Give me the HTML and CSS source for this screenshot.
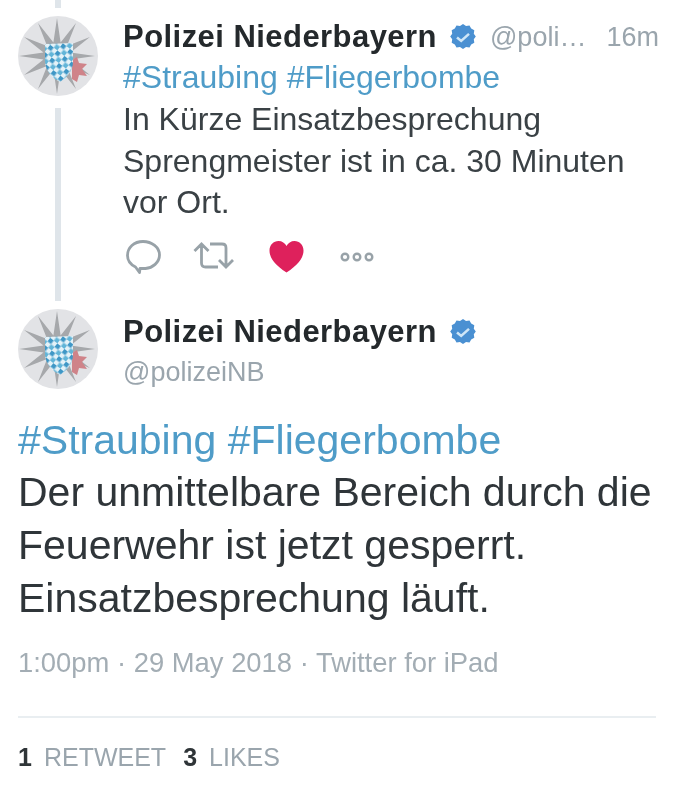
FILE: index.html
```html
<!doctype html>
<html>
	<head>
		<meta charset="utf-8"/>
		<title>Polizei Niederbayern</title>
		<link rel="stylesheet" href="styles.css">
	</head>
	<body>
		<svg class="defs" width="0" height="0">
			<defs>
				<pattern id="lozenge" width="9" height="9" patternUnits="userSpaceOnUse" patternTransform="rotate(38 40 40)">
					<rect width="9" height="9" fill="#e4f2f8"/>
					<rect width="4.500" height="4.500" fill="#3f97c6"/>
					<rect x="4.500" y="4.500" width="4.500" height="4.500" fill="#62b5d8"/>
				</pattern>
				<g id="avatar">
					<circle cx="40" cy="40" r="40" fill="#e2e3e6"/>
					<path d="M39 2L42.600 26.500L58 7.100L48.900 30.100L71.900 21L52.500 36.400L77 40L52.500 43.600L71.900 59L48.900 49.900L58 72.900L42.600 53.500L39 78L35.400 53.500L20 72.900L29.100 49.900L6.100 59L25.500 43.600L1 40L25.500 36.400L6.100 21L29.100 30.100L20 7.100L35.400 26.500Z" fill="#a6a8ab"/>
					<path d="M54 44L59 41L61 47L69 48L64 53L69 60L61 59L59 66L54 63Z" fill="#cf8389"/>
					<path d="M27 28L55 27V46C55 55 48 62 42 66C34 62 27 54 27 45Z" fill="url(#lozenge)"/>
				</g>
				<g id="badge">
					<path d="M14 1l3 2 3.500-.5 1.700 3.100 3.100 1.700-.5 3.500 2 2.700-2 2.700.5 3.500-3.100 1.700-1.700 3.100-3.500-.5-3 2-3-2-3.500.5-1.700-3.100-3.100-1.700.5-3.500-2-2.700 2-2.700-.5-3.500 3.100-1.700 1.700-3.100 3.500.5z" fill="#4a90d2"/>
					<path d="M8 14.500l4.200 3.400 7.800-7" fill="none" stroke="#cfe6f7" stroke-width="2.600"/>
				</g>
			</defs>
		</svg>

		<div class="reply">
			<div class="side">
				<div class="line-top"></div>
				<svg class="avatar" viewBox="0 0 80 80"><use href="#avatar"/></svg>
				<div class="line"></div>
			</div>
			<div class="reply-body">
				<div class="head">
					<span class="name">Polizei Niederbayern</span>
					<svg class="badge" viewBox="0 0 28 28"><use href="#badge"/></svg>
					<span class="handle">@poli…</span>
					<span class="time">16m</span>
				</div>
				<div class="tags">#Straubing #Fliegerbombe</div>
				<p class="text">In Kürze Einsatzbesprechung<br>Sprengmeister ist in ca. 30 Minuten<br>vor Ort.</p>
				<div class="actions">
					<svg class="icon" width="38" height="36" viewBox="0 0 38 36">
						<path d="M15 29.500l-.5 4-4-5.500C5.500 25.500 2.500 21 2.500 16.500 2.500 8.500 9 2.500 18 2.500s16.500 6 16.500 13.500c0 7.500-7 13-14 13.500z" fill="none" stroke="#98a2a8" stroke-width="2.800" stroke-linejoin="round"/>
					</svg>
					<svg class="icon retweet" width="44" height="36" viewBox="0 0 44 36">
						<path d="M1.500 12L8.500 5L15.500 12M8.500 6V24Q8.500 28 12.500 28H25M40 21L33 28L26 21M33 27V9Q33 5 29 5H17" fill="none" stroke="#98a2a8" stroke-width="2.800"/>
					</svg>
					<svg class="icon heart" width="36" height="34" viewBox="0 0 36 34">
						<path d="M17.500 32.500C6 25 .5 18 .5 10.500 .5 5 4.500 1 9.500 1c3.500 0 6.500 2 8 5 1.500-3 4.500-5 8-5 5 0 9 4 9 9.500 0 7.500-5.500 14.500-17 22z" fill="#de215c"/>
					</svg>
					<svg class="icon more" width="36" height="12" viewBox="0 0 36 12">
						<g fill="none" stroke="#98a2a8" stroke-width="2.400">
							<circle cx="6" cy="6" r="3.300"/>
							<circle cx="18" cy="6" r="3.300"/>
							<circle cx="30" cy="6" r="3.300"/>
						</g>
					</svg>
				</div>
			</div>
		</div>

		<div class="tweet">
			<div class="author">
				<svg class="avatar" viewBox="0 0 80 80"><use href="#avatar"/></svg>
				<div class="who">
					<div class="who-name">
						<span class="name">Polizei Niederbayern</span>
						<svg class="badge" viewBox="0 0 28 28"><use href="#badge"/></svg>
					</div>
					<div class="handle">@polizeiNB</div>
				</div>
			</div>
			<div class="big-tags">#Straubing #Fliegerbombe</div>
			<p class="big-text">Der unmittelbare Bereich durch die<br>Feuerwehr ist jetzt gesperrt.<br>Einsatzbesprechung läuft.</p>
			<div class="meta">1:00pm · 29 May 2018 · Twitter for iPad</div>
			<div class="stats">
				<b>1</b><span class="stat-label">RETWEET</span><b>3</b><span class="stat-label">LIKES</span>
			</div>
		</div>
	</body>
</html>
```
FILE: styles.css
```css
html, body {
	margin: 0;
	background: #fff;
}

body {
	width: 680px;
	height: 794px;
	overflow: hidden;
	font-family: "Liberation Sans", Arial, sans-serif;
	color: #292f33;
	filter: blur(0.6px);
}

.defs {
	position: absolute;
}

.reply {
	display: flex;
	height: 301px;
	padding-left: 18px;
}

.side {
	display: flex;
	flex-direction: column;
	align-items: center;
	width: 80px;
	margin-right: 25px;
}

.line-top {
	width: 6px;
	height: 8px;
	background: #dfe5ea;
	margin-bottom: 8px;
}

.line {
	flex: 1;
	width: 6px;
	margin-top: 12px;
	background: #dfe5ea;
}

.avatar {
	display: block;
	width: 80px;
	height: 80px;
	flex-shrink: 0;
}

.reply-body {
	flex: 1;
	padding-top: 17px;
}

.head {
	display: flex;
	align-items: center;
	height: 40px;
}

.name {
	font-size: 31px;
	font-weight: bold;
	letter-spacing: 0.45px;
	color: #24292c;
}

.badge {
	width: 28px;
	height: 28px;
	margin-left: 12px;
	flex-shrink: 0;
}

.handle {
	font-size: 27px;
	color: #9aa5ad;
}

.head .handle {
	margin-left: 13px;
}

.time {
	margin-left: 20px;
	font-size: 27px;
	color: #9aa5ad;
}

.tags {
	font-size: 32px;
	line-height: 41px;
	color: #4f9cc8;
}

.text {
	margin: 1px 0 0;
	font-size: 32px;
	line-height: 41.500px;
	color: #3a4145;
}

.actions {
	display: flex;
	align-items: center;
	height: 36px;
	margin-top: 15px;
	padding-left: 2px;
}

.retweet {
	margin-left: 30px;
}

.heart {
	margin-left: 32px;
}

.more {
	margin-left: 34px;
}

.tweet {
	padding: 8px 24px 0 18px;
}

.author {
	display: flex;
}

.who {
	margin-left: 25px;
	padding-top: 3px;
}

.who-name {
	display: flex;
	align-items: center;
	height: 40px;
}

.who .handle {
	line-height: 40px;
}

.big-tags {
	margin-top: 22px;
	font-size: 41px;
	line-height: 52px;
	color: #4f9cc8;
}

.big-text {
	margin: 0;
	font-size: 41px;
	line-height: 53px;
	color: #2f3539;
}

.meta {
	margin-top: 20px;
	font-size: 27.400px;
	line-height: 36px;
	color: #a3adb4;
}

.stats {
	margin-top: 35px;
	padding-top: 21px;
	border-top: 2px solid #e9eef1;
	font-size: 25px;
	line-height: 36px;
}

.stats b {
	color: #2f3538;
}

.stat-label {
	margin: 0 17px 0 12px;
	color: #9aa5ad;
}
```
